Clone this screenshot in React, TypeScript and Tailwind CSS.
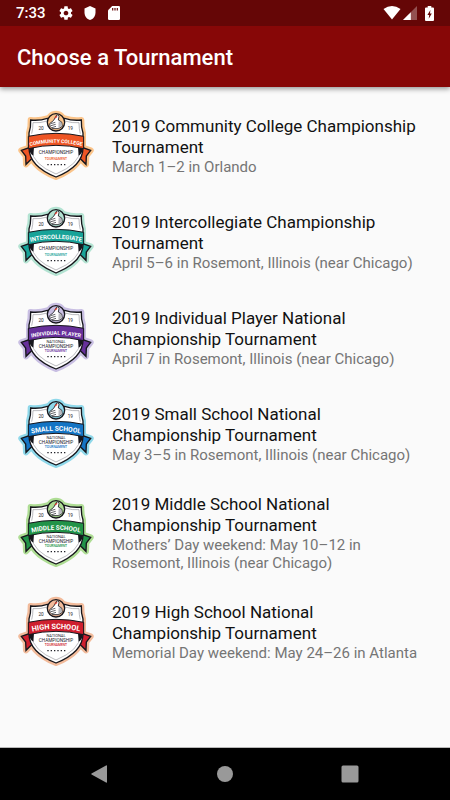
import React from "react";

type Tournament = {
  id: string;
  title: string;
  details: string;
  banner: string;
  bannerSize: number;
  color: string;
  halo: string;
  national: boolean;
};

const tournaments: Tournament[] = [
  { id: "community", title: "2019 Community College Championship Tournament", details: "March 1–2 in Orlando", banner: "COMMUNITY COLLEGE", bannerSize: 15, color: "#ee5524", halo: "#fbc48a", national: false },
  { id: "intercollegiate", title: "2019 Intercollegiate Championship Tournament", details: "April 5–6 in Rosemont, Illinois (near Chicago)", banner: "INTERCOLLEGIATE", bannerSize: 18, color: "#17a398", halo: "#b3e3d2", national: false },
  { id: "individual", title: "2019 Individual Player National Championship Tournament", details: "April 7 in Rosemont, Illinois (near Chicago)", banner: "INDIVIDUAL PLAYER", bannerSize: 16, color: "#67309b", halo: "#c9bfe3", national: true },
  { id: "small", title: "2019 Small School National Championship Tournament", details: "May 3–5 in Rosemont, Illinois (near Chicago)", banner: "SMALL SCHOOL", bannerSize: 20, color: "#1474c4", halo: "#8fd8ea", national: true },
  { id: "middle", title: "2019 Middle School National Championship Tournament", details: "Mothers’ Day weekend: May 10–12 in Rosemont, Illinois (near Chicago)", banner: "MIDDLE SCHOOL", bannerSize: 19, color: "#219348", halo: "#aedd94", national: true },
  { id: "high", title: "2019 High School National Championship Tournament", details: "Memorial Day weekend: May 24–26 in Atlanta", banner: "HIGH SCHOOL", bannerSize: 22, color: "#cf1f2e", halo: "#f2bb9b", national: true },
];

const SHIELD = "M62 57 Q88 60 112 52 L164 52 Q188 60 214 57 Q213 78 219 96 L219 140 Q219 195 138 228 Q57 195 57 140 L57 96 Q63 78 62 57 Z";
const BAND = "M55 106 Q138 88 221 106 L221 143 Q138 123 55 143 Z";
const TAILS = "M34 148 L58 140 L74 164 L48 190 L47 165 Z M242 148 L218 140 L202 164 L228 190 L229 165 Z";

function Badge({ t }: { t: Tournament }) {
  const arc = `arc-${t.id}`;
  return (
    <svg viewBox="24 27 228 216" className="h-18 w-19 shrink-0" aria-hidden="true">
      <g fill={t.halo} stroke={t.halo} strokeWidth="18" strokeLinejoin="round">
        <path d={SHIELD} />
        <path d={TAILS} />
        <circle cx="138" cy="62" r="24" />
      </g>
      <path d={TAILS} fill={t.color} stroke="#16161c" strokeWidth="4" />
      <path d={SHIELD} fill="#fff" stroke="#16161c" strokeWidth="4" />
      <path d="M69 65 Q90 67 112 60 M164 60 Q188 67 207 65 M69 65 Q69 84 65 98 M207 65 Q207 84 211 98 M65 146 Q68 190 138 219 Q208 190 211 146" fill="none" stroke="#77777e" strokeWidth="1.5" />
      <path d="M57 139 L72 139 L70 164 Q57 158 57 139 Z M219 139 L204 139 L206 164 Q219 158 219 139 Z" fill="#16161c" />
      <path d={BAND} fill={t.color} stroke="#16161c" strokeWidth="3" strokeLinejoin="round" />
      <circle cx="138" cy="64" r="26" fill={t.halo} stroke="#16161c" strokeWidth="4" />
      <path d="M119 68 L131 58 L140 42 Q146 39 147 46 L145 57 L155 63 L157 76 L145 83 L127 83 Q118 77 119 68 Z" fill="#fff" stroke="#16161c" strokeWidth="2.5" strokeLinejoin="round" />
      <path d="M122 68 L136 64 M123 74 L137 70 M126 80 L138 76" fill="none" stroke="#16161c" strokeWidth="2" />
      <path d="M146 61 L154 64 L155 75 L145 81 Z" fill="#b9b9bf" />
      <path d="M135 51 L141 46" stroke="#d73a2d" strokeWidth="4" />
      <path id={arc} d="M55 136 Q138 115 221 136" fill="none" />
      <text className="font-['Roboto',sans-serif] font-bold" fontSize={t.bannerSize} fill="#fff" textAnchor="middle">
        <textPath href={`#${arc}`} startOffset="50%">{t.banner}</textPath>
      </text>
      <g className="font-['Roboto',sans-serif]" textAnchor="middle" fill="#222229">
        <text x="93" y="87" fontSize="14">20</text>
        <text x="181" y="87" fontSize="14">19</text>
        {t.national && <text x="138" y="150" fontSize="12">NATIONAL</text>}
        <text x="138" y={t.national ? 164 : 160} fontSize="14">CHAMPIONSHIP</text>
        <text x="138" y={t.national ? 178 : 176} fontSize="10" fontWeight="500" fill={t.color}>TOURNAMENT</text>
      </g>
      <path d="M112 191 H166" stroke="#222229" strokeWidth="4" strokeDasharray="4 6" />
    </svg>
  );
}

function StatusBar() {
  return (
    <div className="flex h-[26px] items-center bg-[#650606] px-4 text-white">
      <span className="text-[15px] leading-none font-medium">7:33</span>
      <svg viewBox="0 0 24 24" className="ml-3 size-4" fill="currentColor" aria-hidden="true">
        <path d="M19.43 12.98c.04-.32.07-.64.07-.98s-.03-.66-.07-.98l2.11-1.65c.19-.15.24-.42.12-.64l-2-3.46c-.12-.22-.39-.3-.61-.22l-2.49 1c-.52-.4-1.08-.73-1.69-.98l-.38-2.65C14.46 2.18 14.25 2 14 2h-4c-.25 0-.46.18-.49.42l-.38 2.65c-.61.25-1.17.59-1.69.98l-2.49-1c-.23-.09-.49 0-.61.22l-2 3.46c-.13.22-.07.49.12.64l2.11 1.65c-.04.32-.07.65-.07.98s.03.66.07.98l-2.11 1.65c-.19.15-.24.42-.12.64l2 3.46c.12.22.39.3.61.22l2.49-1c.52.4 1.08.73 1.69.98l.38 2.65c.03.24.24.42.49.42h4c.25 0 .46-.18.49-.42l.38-2.65c.61-.25 1.17-.59 1.69-.98l2.49 1c.23.09.49 0 .61-.22l2-3.46c.12-.22.07-.49-.12-.64l-2.11-1.65zM12 15.5c-1.93 0-3.5-1.57-3.5-3.5s1.57-3.5 3.5-3.5 3.5 1.57 3.5 3.5-1.57 3.5-3.5 3.5z" />
      </svg>
      <svg viewBox="0 0 12 14" className="ml-2.5 h-3.5 w-3" fill="currentColor" aria-hidden="true">
        <path d="M6 0 L11.5 2.4 V6.4 C11.5 10 9.3 12.9 6 14 C2.7 12.9 .5 10 .5 6.4 V2.4 Z" />
      </svg>
      <svg viewBox="0 0 12 14" className="ml-3 h-3.5 w-3" aria-hidden="true">
        <path d="M4.2 0 H10.8 Q12 0 12 1.2 V12.8 Q12 14 10.8 14 H1.2 Q0 14 0 12.8 V4.2 Z" fill="#fff" />
        <path d="M4.7 2 V4.5 M7 2 V4.5 M9.3 2 V4.5" stroke="#650606" strokeWidth="1.2" />
      </svg>
      <div className="ml-auto flex items-center">
        <svg viewBox="0 0 18 14" className="h-3.5 w-4.5" fill="currentColor" aria-hidden="true">
          <path d="M0.5 3 Q9 -3 17.5 3 L9 13.5 Z" />
        </svg>
        <svg viewBox="0 0 14 14" className="ml-0.5 size-3.5" fill="currentColor" aria-hidden="true">
          <path d="M14 0 V14 H0 Z" opacity=".3" />
          <path d="M7.8 6.2 V14 H0 Z" />
        </svg>
        <svg viewBox="0 0 9 15" className="ml-2 h-[15px] w-[9px]" aria-hidden="true">
          <path d="M2.7 0 H6.3 V1.5 H8 Q9 1.5 9 2.5 V14 Q9 15 8 15 H1 Q0 15 0 14 V2.5 Q0 1.5 1 1.5 H2.7 Z" fill="#fff" />
          <path d="M5.4 4 L2.4 9 H4.2 L3.7 12.8 L6.8 7.6 H5 Z" fill="#650606" />
        </svg>
      </div>
    </div>
  );
}

export default function App() {
  return (
    <div className="flex min-h-screen flex-col bg-[#fafafa] font-['Roboto',sans-serif]">
      <header className="shadow-[0_2px_5px_rgba(0,0,0,0.4)]">
        <StatusBar />
        <div className="flex h-[61px] items-center bg-[#870707] px-[17px] pt-0.5">
          <h1 className="text-[22px] font-medium text-white">Choose a Tournament</h1>
        </div>
      </header>
      <main className="flex-1 border-b border-[#b8b8b8] py-[11px]">
        <ul>
          {tournaments.map((t) => (
            <li key={t.id}>
              <button type="button" className="flex w-full items-center gap-[18px] py-3 pr-[26px] pl-[18px] text-left">
                <Badge t={t} />
                <span className="min-w-0 flex-1">
                  <span className="block text-[17px] leading-[21px] text-[#111111]">{t.title}</span>
                  <span className="block text-[15px] leading-[18px] text-[#757575]">{t.details}</span>
                </span>
              </button>
            </li>
          ))}
        </ul>
      </main>
      <nav className="flex h-[52px] items-center justify-center gap-[107px] bg-black text-[#999999]">
        <button type="button" aria-label="Back">
          <svg viewBox="0 0 18 18" className="size-[18px]" fill="currentColor"><path d="M15 0.5 Q16 0 16 1 V17 Q16 18 15 17.5 L0.5 9.5 Q0 9 0.5 8.5 Z" /></svg>
        </button>
        <button type="button" aria-label="Home">
          <svg viewBox="0 0 18 18" className="size-[18px]" fill="currentColor"><circle cx="9" cy="9" r="8" /></svg>
        </button>
        <button type="button" aria-label="Recent apps">
          <svg viewBox="0 0 18 18" className="size-[18px]" fill="currentColor"><rect x="0.5" y="0.5" width="17" height="17" rx="1.5" /></svg>
        </button>
      </nav>
    </div>
  );
}
